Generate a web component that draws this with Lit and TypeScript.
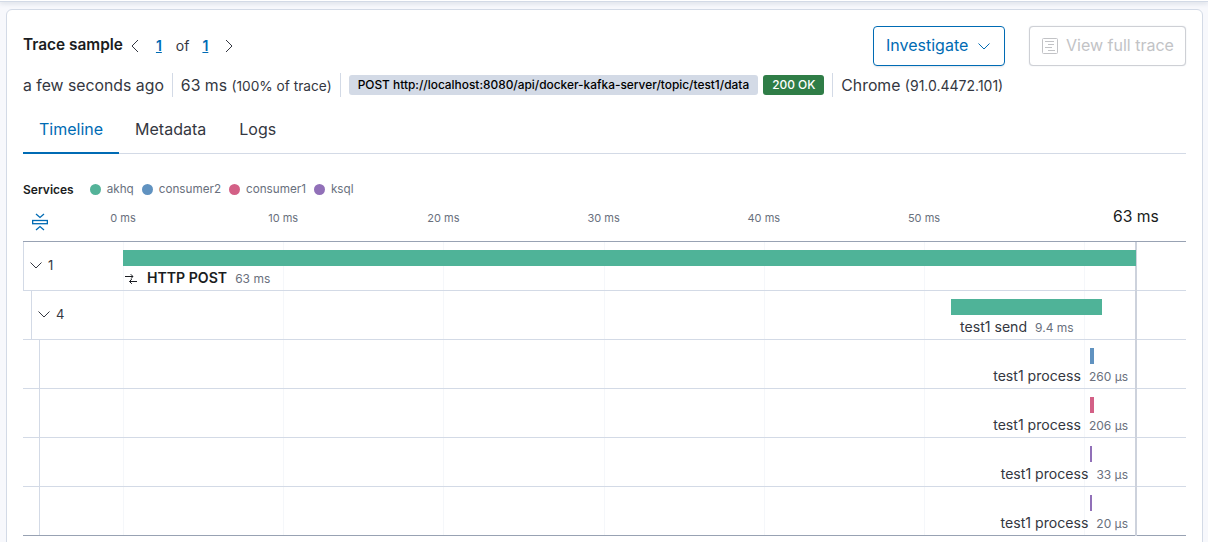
import { LitElement, html, css, svg } from "lit";
import { customElement } from "lit/decorators.js";

const ORIGIN = 123;
const PX_PER_MS = 16.02;
const ticks = [0, 10, 20, 30, 40, 50];
const gridLines = [0, 10, 20, 30, 40, 50, 60];

interface Row {
  name: string;
  dur: string;
  color: string;
  left: number;
  width: number;
  indent: number;
  count?: string;
  labelStart?: number;
  labelEnd?: number;
  root?: boolean;
}

const rows: Row[] = [
  { name: "HTTP POST", dur: "63 ms", color: "#4fb398", left: 123, width: 1013, indent: 0, count: "1", labelStart: 125, root: true },
  { name: "test1 send", dur: "9.4 ms", color: "#4fb398", left: 951, width: 151, indent: 8, count: "4", labelStart: 960 },
  { name: "test1 process", dur: "260 µs", color: "#6092c0", left: 1090, width: 4, indent: 16, labelEnd: 1128 },
  { name: "test1 process", dur: "206 µs", color: "#d36086", left: 1090, width: 4, indent: 16, labelEnd: 1128 },
  { name: "test1 process", dur: "33 µs", color: "#9170b8", left: 1090, width: 2, indent: 16, labelEnd: 1128 },
  { name: "test1 process", dur: "20 µs", color: "#9170b8", left: 1090, width: 2, indent: 16, labelEnd: 1128 },
];

const services = [
  { name: "akhq", color: "#54b399" },
  { name: "consumer2", color: "#6092c0" },
  { name: "consumer1", color: "#d36086" },
  { name: "ksql", color: "#9170b8" },
];

const chevron = (d: string, size = 16, color = "currentColor") => html`<svg width=${size} height=${size} viewBox="0 0 16 16" fill="none" stroke=${color} stroke-width="1" aria-hidden="true"><path d=${d} /></svg>`;
const DOWN = "M2.5 5.5 L8 11 L13.5 5.5";

@customElement("app-root")
export class AppRoot extends LitElement {
  static styles = css`
    :host { display: block; height: 542px; overflow: hidden; background: #f7f8fc; font-family: Inter, "Liberation Sans", sans-serif; color: #343741; position: relative; }
    * { box-sizing: border-box; }
    .topbar { height: 2px; background: #fff; border-bottom: 1px solid #d3dae6; box-shadow: 0 1px 4px rgba(152,162,179,.5); }
    .card { margin: 7px 5px 0 6px; height: 560px; background: #fff; border: 1px solid #d3dae6; border-radius: 6px; padding: 16px 16px 0 16px; }
    .head { display: flex; align-items: center; height: 40px; }
    .title { font-size: 15.4px; font-weight: 600; color: #1a1c21; line-height: 20px; margin-right: 4px; padding-bottom: 2px; }
    .pager { display: flex; align-items: center; font-size: 14px; color: #343741; }
    .pager svg { display: block; }
    .pager a { color: #006bb4; font-weight: 600; text-decoration: underline; padding-bottom: 1px; }
    .pager span { padding-bottom: 1px; }
    .p1 { margin: 0 14px 0 13px; }
    .pof { margin-right: 13px; }
    .p2 { margin: 0 13px 0 0; }
    .spacer { flex: 1; }
    .btn { height: 40px; border-radius: 4px; display: flex; align-items: center; font-size: 16px; background: #fff; }
    .btn span { padding-bottom: 2px; }
    .inv { width: 132px; border: 1px solid #006bb4; color: #006bb4; padding-left: 12px; gap: 8px; box-shadow: 0 2px 2px -1px rgba(152,162,179,.3); }
    .full { width: 157px; margin-left: 24px; border: 1px solid #ced0d5; color: #c2c3c6; padding-left: 12px; gap: 8px; background: #fff; box-shadow: 0 0 1px rgba(152,162,179,.5); }
    .meta { display: flex; align-items: center; height: 24px; margin-top: 7px; font-size: 15.8px; color: #343741; }
    .meta small { font-size: 13.7px; }
    .meta small.version { font-size: 14px; }
    .sep { width: 1px; height: 24px; background: #d3dae6; margin: 0 8px; flex: none; }
    .badge { font-size: 11.9px; font-weight: 500; height: 20px; line-height: 20px; padding: 0 9px; border-radius: 3px; background: #d3dae6; color: #000; white-space: nowrap; }
    .ok { background: #2f7d47; color: #fff; margin-left: 5px; padding: 0 9px; }
    .tabs { display: flex; height: 48px; margin-top: 9px; border-bottom: 1px solid #d3dae6; }
    .tab { padding: 0 16px; font-size: 16px; line-height: 46px; height: 48px; color: #343741; }
    .tab.on { color: #006bb4; border-bottom: 2px solid #006bb4; }
    .tab.logs { margin-left: 1px; }
    .legend { display: flex; align-items: center; margin-top: 25px; height: 20px; font-size: 11.7px; color: #69707d; }
    .legend b { font-size: 12px; font-weight: 600; color: #1a1c21; margin-right: 16px; }
    .svc { display: flex; align-items: center; gap: 6px; margin-right: 8px; }
    .dot { width: 11px; height: 11px; border-radius: 50%; }
    .axis { height: 42px; position: relative; margin-top: 1px; border-bottom: 1px solid #98a2b3; }
    .axis svg { position: absolute; left: 9px; top: 13px; }
    .tick { position: absolute; top: 10px; font-size: 11px; line-height: 16px; color: #69707d; transform: translateX(-50%); white-space: nowrap; }
    .end { position: absolute; left: 1090px; top: 7px; font-size: 15.7px; line-height: 20px; color: #1a1c21; white-space: nowrap; }
    .chart { position: relative; }
    .grid { position: absolute; top: 0; bottom: 0; width: 1px; background: #f5f7fa; }
    .marker { position: absolute; top: 0; bottom: 0; width: 2px; background: #cdd2dc; left: 1112px; z-index: 2; }
    .row { position: relative; height: 49px; border-bottom: 1px solid #d3dae6; }
    .row:last-child { border-bottom-color: #98a2b3; }
    .edge { height: 100%; border-left: 1px solid #d3dae6; }
    .toggle { position: absolute; top: 15px; display: flex; align-items: center; gap: 4px; font-size: 13px; line-height: 16px; color: #343741; }
    .toggle svg { display: block; }
    .bar { position: absolute; top: 8px; height: 16px; z-index: 3; }
    .label { position: absolute; top: 26px; display: flex; align-items: baseline; gap: 8px; font-size: 14.1px; line-height: 20px; color: #343741; white-space: nowrap; }
    .label.root { font-weight: 600; color: #1a1c21; }
    .label .dur { font-size: 12px; color: #69707d; font-weight: 400; }
    .label svg { align-self: center; flex: none; margin-right: 2px; }
  `;

  private renderRow(r: Row) {
    // Coordinates in the data are page x; the chart starts at x = 23.
    const base = 23;
    const labelStyle = r.labelEnd
      ? `right:${1186 - r.labelEnd}px`
      : `left:${(r.labelStart ?? 0) - base}px`;
    return html`<div class="row">
      <div class="edge" style="margin-left:${r.indent}px"></div>
      ${r.count
        ? html`<div class="toggle" style="left:${r.indent + 5}px">
            ${chevron(DOWN, 16)}<span>${r.count}</span>
          </div>`
        : ""}
      <div class="bar" style="left:${r.left - base}px;width:${r.width}px;background:${r.color}"></div>
      <div class="label ${r.root ? "root" : ""}" style=${labelStyle}>
        ${r.root
          ? svg`<svg width="12" height="12" viewBox="0 0 12 12" fill="none" stroke="#1a1c21" stroke-width="1"><path d="M0 3.5h8M5.7 1.2L8 3.5 5.7 5.8M12 8.5H4.5M6.8 6.2L4.5 8.5 6.8 10.8"/></svg>`
          : ""}
        <span>${r.name}</span><span class="dur">${r.dur}</span>
      </div>
    </div>`;
  }

  render() {
    return html`
      <div class="topbar"></div>
      <div class="card">
        <div class="head">
          <span class="title">Trace sample</span>
          <div class="pager">
            ${chevron("M11 2 L5 8 L11 14")}
            <a class="p1">1</a><span class="pof">of</span><a class="p2">1</a>
            ${chevron("M5 2 L11 8 L5 14")}
          </div>
          <div class="spacer"></div>
          <div class="btn inv"><span>Investigate</span> ${chevron(DOWN)}</div>
          <div class="btn full">
            <svg width="16" height="16" viewBox="0 0 16 16" fill="none" stroke="#c2c3c6" stroke-width="1" aria-hidden="true"><rect x="0.5" y="0.5" width="15" height="15" rx="1"/><path d="M3 3.5h9M6 6.5h6M3 9.5h7M6 12.5h7"/></svg>
            <span>View full trace</span>
          </div>
        </div>
        <div class="meta">
          <span>a few seconds ago</span><div class="sep"></div>
          <span>63 ms&nbsp;<small>(100% of trace)</small></span><div class="sep"></div>
          <span class="badge">POST http://localhost:8080/api/docker-kafka-server/topic/test1/data</span>
          <span class="badge ok">200 OK</span><div class="sep"></div>
          <span>Chrome&nbsp;<small class="version">(91.0.4472.101)</small></span>
        </div>
        <div class="tabs">
          <div class="tab on">Timeline</div><div class="tab">Metadata</div><div class="tab logs">Logs</div>
        </div>
        <div class="legend">
          <b>Services</b>
          ${services.map((s) => html`<div class="svc"><span class="dot" style="background:${s.color}"></span>${s.name}</div>`)}
        </div>
        <div class="axis">
          <svg width="16" height="18" viewBox="0 0 16 18" fill="none" stroke="#006bb4" stroke-width="1.3" aria-hidden="true"><rect x="0.65" y="7.5" width="14.7" height="3.2"/><path d="M4 1L8 4.5L12 1M4 17L8 13.5L12 17"/></svg>
          ${ticks.map((t) => html`<span class="tick" style="left:${ORIGIN - 23 + t * PX_PER_MS}px">${t} ms</span>`)}
          <span class="end">63 ms</span>
        </div>
        <div class="chart">
          ${gridLines.map((t) => html`<div class="grid" style="left:${ORIGIN - 23 + t * PX_PER_MS}px"></div>`)}
          <div class="marker"></div>
          ${rows.map((r) => this.renderRow(r))}
        </div>
      </div>
    `;
  }
}
